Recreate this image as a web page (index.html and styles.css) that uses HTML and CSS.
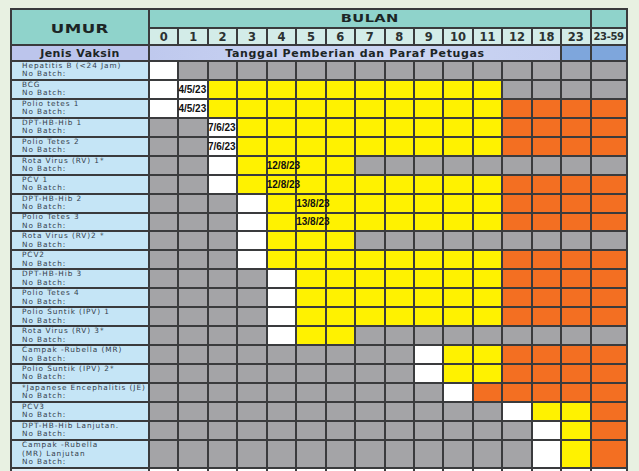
FILE: index.html
```html
<!DOCTYPE html>
<html lang="id">
<head>
<meta charset="utf-8">
<title>Jadwal Imunisasi</title>
<link rel="stylesheet" href="styles.css">
</head>
<body>
<main class="page">
<div class="sched">
  <div class="hd umur"><span class="wide">UMUR</span></div>
  <div class="hd bulan"><span class="wide">BULAN</span></div>
  <div class="teal"></div>

  <div class="hd num">0</div><div class="hd num">1</div><div class="hd num">2</div><div class="hd num">3</div><div class="hd num">4</div><div class="hd num">5</div><div class="hd num">6</div><div class="hd num">7</div><div class="hd num">8</div><div class="hd num">9</div><div class="hd num">10</div><div class="hd num">11</div><div class="hd num">12</div><div class="hd num">18</div><div class="hd num">23</div><div class="hd num small">23-59</div>

  <div class="hd jenis">Jenis Vaksin</div>
  <div class="hd tgl">Tanggal Pemberian dan Paraf Petugas</div>
  <div class="blue"></div><div class="blue"></div>

  <!-- Hepatitis B -->
  <div class="lbl"><span>Hepatitis B (&lt;24 Jam)</span><span>No Batch:</span></div>
  <div class="w"></div><div class="g"></div><div class="g"></div><div class="g"></div><div class="g"></div><div class="g"></div><div class="g"></div><div class="g"></div><div class="g"></div><div class="g"></div><div class="g"></div><div class="g"></div><div class="g"></div><div class="g"></div><div class="g"></div><div class="g"></div>

  <!-- BCG -->
  <div class="lbl"><span>BCG</span><span>No Batch:</span></div>
  <div class="w"></div><div class="w d"><span>4/5/23</span></div><div class="y"></div><div class="y"></div><div class="y"></div><div class="y"></div><div class="y"></div><div class="y"></div><div class="y"></div><div class="y"></div><div class="y"></div><div class="y"></div><div class="g"></div><div class="g"></div><div class="g"></div><div class="g"></div>

  <!-- Polio tetes 1 -->
  <div class="lbl"><span>Polio tetes 1</span><span>No Batch:</span></div>
  <div class="w"></div><div class="w d"><span>4/5/23</span></div><div class="y"></div><div class="y"></div><div class="y"></div><div class="y"></div><div class="y"></div><div class="y"></div><div class="y"></div><div class="y"></div><div class="y"></div><div class="y"></div><div class="o"></div><div class="o"></div><div class="o"></div><div class="o"></div>

  <!-- DPT-HB-Hib 1 -->
  <div class="lbl"><span>DPT-HB-Hib 1</span><span>No Batch:</span></div>
  <div class="g"></div><div class="g"></div><div class="w d"><span>7/6/23</span></div><div class="y"></div><div class="y"></div><div class="y"></div><div class="y"></div><div class="y"></div><div class="y"></div><div class="y"></div><div class="y"></div><div class="y"></div><div class="o"></div><div class="o"></div><div class="o"></div><div class="o"></div>

  <!-- Polio Tetes 2 -->
  <div class="lbl"><span>Polio Tetes 2</span><span>No Batch:</span></div>
  <div class="g"></div><div class="g"></div><div class="w d"><span>7/6/23</span></div><div class="y"></div><div class="y"></div><div class="y"></div><div class="y"></div><div class="y"></div><div class="y"></div><div class="y"></div><div class="y"></div><div class="y"></div><div class="o"></div><div class="o"></div><div class="o"></div><div class="o"></div>

  <!-- Rota Virus 1 -->
  <div class="lbl"><span>Rota Virus (RV) 1*</span><span>No Batch:</span></div>
  <div class="g"></div><div class="g"></div><div class="w"></div><div class="y"></div><div class="y d"><span>12/8/23</span></div><div class="y"></div><div class="y"></div><div class="g"></div><div class="g"></div><div class="g"></div><div class="g"></div><div class="g"></div><div class="g"></div><div class="g"></div><div class="g"></div><div class="g"></div>

  <!-- PCV 1 -->
  <div class="lbl"><span>PCV 1</span><span>No Batch:</span></div>
  <div class="g"></div><div class="g"></div><div class="w"></div><div class="y"></div><div class="y d"><span>12/8/23</span></div><div class="y"></div><div class="y"></div><div class="y"></div><div class="y"></div><div class="y"></div><div class="y"></div><div class="y"></div><div class="o"></div><div class="o"></div><div class="o"></div><div class="o"></div>

  <!-- DPT-HB-Hib 2 -->
  <div class="lbl"><span>DPT-HB-Hib 2</span><span>No Batch:</span></div>
  <div class="g"></div><div class="g"></div><div class="g"></div><div class="w"></div><div class="y"></div><div class="y d"><span>13/8/23</span></div><div class="y"></div><div class="y"></div><div class="y"></div><div class="y"></div><div class="y"></div><div class="y"></div><div class="o"></div><div class="o"></div><div class="o"></div><div class="o"></div>

  <!-- Polio Tetes 3 -->
  <div class="lbl"><span>Polio Tetes 3</span><span>No Batch:</span></div>
  <div class="g"></div><div class="g"></div><div class="g"></div><div class="w"></div><div class="y"></div><div class="y d"><span>13/8/23</span></div><div class="y"></div><div class="y"></div><div class="y"></div><div class="y"></div><div class="y"></div><div class="y"></div><div class="o"></div><div class="o"></div><div class="o"></div><div class="o"></div>

  <!-- Rota Virus 2 -->
  <div class="lbl"><span>Rota Virus (RV)2 *</span><span>No Batch:</span></div>
  <div class="g"></div><div class="g"></div><div class="g"></div><div class="w"></div><div class="y"></div><div class="y"></div><div class="y"></div><div class="g"></div><div class="g"></div><div class="g"></div><div class="g"></div><div class="g"></div><div class="g"></div><div class="g"></div><div class="g"></div><div class="g"></div>

  <!-- PCV2 -->
  <div class="lbl"><span>PCV2</span><span>No Batch:</span></div>
  <div class="g"></div><div class="g"></div><div class="g"></div><div class="w"></div><div class="y"></div><div class="y"></div><div class="y"></div><div class="y"></div><div class="y"></div><div class="y"></div><div class="y"></div><div class="y"></div><div class="o"></div><div class="o"></div><div class="o"></div><div class="o"></div>

  <!-- DPT-HB-Hib 3 -->
  <div class="lbl"><span>DPT-HB-Hib 3</span><span>No Batch:</span></div>
  <div class="g"></div><div class="g"></div><div class="g"></div><div class="g"></div><div class="w"></div><div class="y"></div><div class="y"></div><div class="y"></div><div class="y"></div><div class="y"></div><div class="y"></div><div class="y"></div><div class="o"></div><div class="o"></div><div class="o"></div><div class="o"></div>

  <!-- Polio Tetes 4 -->
  <div class="lbl"><span>Polio Tetes 4</span><span>No Batch:</span></div>
  <div class="g"></div><div class="g"></div><div class="g"></div><div class="g"></div><div class="w"></div><div class="y"></div><div class="y"></div><div class="y"></div><div class="y"></div><div class="y"></div><div class="y"></div><div class="y"></div><div class="o"></div><div class="o"></div><div class="o"></div><div class="o"></div>

  <!-- Polio Suntik (IPV) 1 -->
  <div class="lbl"><span>Polio Suntik (IPV) 1</span><span>No Batch:</span></div>
  <div class="g"></div><div class="g"></div><div class="g"></div><div class="g"></div><div class="w"></div><div class="y"></div><div class="y"></div><div class="y"></div><div class="y"></div><div class="y"></div><div class="y"></div><div class="y"></div><div class="o"></div><div class="o"></div><div class="o"></div><div class="o"></div>

  <!-- Rota Virus 3 -->
  <div class="lbl"><span>Rota Virus (RV) 3*</span><span>No Batch:</span></div>
  <div class="g"></div><div class="g"></div><div class="g"></div><div class="g"></div><div class="w"></div><div class="y"></div><div class="y"></div><div class="g"></div><div class="g"></div><div class="g"></div><div class="g"></div><div class="g"></div><div class="g"></div><div class="g"></div><div class="g"></div><div class="g"></div>

  <!-- Campak-Rubella (MR) -->
  <div class="lbl"><span>Campak -Rubella (MR)</span><span>No Batch:</span></div>
  <div class="g"></div><div class="g"></div><div class="g"></div><div class="g"></div><div class="g"></div><div class="g"></div><div class="g"></div><div class="g"></div><div class="g"></div><div class="w"></div><div class="y"></div><div class="y"></div><div class="o"></div><div class="o"></div><div class="o"></div><div class="o"></div>

  <!-- Polio Suntik (IPV) 2 -->
  <div class="lbl"><span>Polio Suntik (IPV) 2*</span><span>No Batch:</span></div>
  <div class="g"></div><div class="g"></div><div class="g"></div><div class="g"></div><div class="g"></div><div class="g"></div><div class="g"></div><div class="g"></div><div class="g"></div><div class="w"></div><div class="y"></div><div class="y"></div><div class="o"></div><div class="o"></div><div class="o"></div><div class="o"></div>

  <!-- Japanese Encephalitis -->
  <div class="lbl"><span>*Japanese Encephalitis (JE)</span><span>No Batch:</span></div>
  <div class="g"></div><div class="g"></div><div class="g"></div><div class="g"></div><div class="g"></div><div class="g"></div><div class="g"></div><div class="g"></div><div class="g"></div><div class="g"></div><div class="w"></div><div class="o"></div><div class="o"></div><div class="o"></div><div class="o"></div><div class="o"></div>

  <!-- PCV3 -->
  <div class="lbl"><span>PCV3</span><span>No Batch:</span></div>
  <div class="g"></div><div class="g"></div><div class="g"></div><div class="g"></div><div class="g"></div><div class="g"></div><div class="g"></div><div class="g"></div><div class="g"></div><div class="g"></div><div class="g"></div><div class="g"></div><div class="w"></div><div class="y"></div><div class="y"></div><div class="o"></div>

  <!-- DPT-HB-Hib Lanjutan -->
  <div class="lbl"><span>DPT-HB-Hib Lanjutan.</span><span>No Batch:</span></div>
  <div class="g"></div><div class="g"></div><div class="g"></div><div class="g"></div><div class="g"></div><div class="g"></div><div class="g"></div><div class="g"></div><div class="g"></div><div class="g"></div><div class="g"></div><div class="g"></div><div class="g"></div><div class="w"></div><div class="y"></div><div class="o"></div>

  <!-- Campak-Rubella Lanjutan -->
  <div class="lbl"><span>Campak -Rubella</span><span>(MR) Lanjutan</span><span>No Batch:</span></div>
  <div class="g"></div><div class="g"></div><div class="g"></div><div class="g"></div><div class="g"></div><div class="g"></div><div class="g"></div><div class="g"></div><div class="g"></div><div class="g"></div><div class="g"></div><div class="g"></div><div class="g"></div><div class="w"></div><div class="y"></div><div class="o"></div>

  <!-- next row (cut off) -->
  <div class="lbl blank"></div>
  <div class="w"></div><div class="w"></div><div class="w"></div><div class="w"></div><div class="w"></div><div class="w"></div><div class="w"></div><div class="w"></div><div class="w"></div><div class="w"></div><div class="w"></div><div class="w"></div><div class="w"></div><div class="w"></div><div class="w"></div><div class="w"></div>
</div>
</main>
</body>
</html>
```

FILE: styles.css
```css
* { box-sizing: border-box; }

html, body {
  margin: 0;
  height: 471px;
  overflow: hidden;
}

body {
  background: #e8f1e2;
  font-family: "DejaVu Sans", "Noto Sans", sans-serif;
}

.page {
  padding: 8px 0 0 10px;
}

.sched {
  display: grid;
  width: max-content;
  grid-template-columns: 136px repeat(15, 27.45px) 34px;
  grid-template-rows: 17px 15px 14px repeat(20, 16.95px) 26px 20px;
  gap: 2px;
  padding: 2px;
  background: #3a3b3d;
}

.sched > div { min-width: 0; }

.hd {
  display: flex;
  align-items: center;
  justify-content: center;
  font-weight: bold;
  color: #1c2525;
  white-space: nowrap;
}

.umur {
  grid-row: span 2;
  background: #8fd3cb;
  font-size: 12.5px;
  padding-top: 2px;
}

.bulan {
  grid-column: span 15;
  background: #8fd3cb;
  font-size: 11px;
}

.wide {
  display: inline-block;
  letter-spacing: 0.3px;
  transform: scaleX(1.33);
}

.teal { background: #8fd3cb; }

.num {
  background: #d3ece8;
  font-size: 11.5px;
  color: #2b3232;
}

.num.small {
  font-size: 10px;
  letter-spacing: -0.4px;
}

.jenis {
  background: #bcc5ec;
  font-size: 11px;
  letter-spacing: 0.45px;
}

.tgl {
  grid-column: span 14;
  background: linear-gradient(90deg, #bfc9ee 0%, #ccd6f3 55%, #c4cef0 100%);
  font-size: 11px;
  letter-spacing: 0.65px;
}

.blue { background: #7ea6dc; }

.lbl {
  display: flex;
  flex-direction: column;
  justify-content: center;
  background: #c5e5f6;
  padding-left: 10px;
  font-size: 7.3px;
  line-height: 8.5px;
  letter-spacing: 0.95px;
  color: #343d4c;
  white-space: nowrap;
}

.lbl.blank { background: #e6f2f8; }

.w { background: #ffffff; }
.g { background: #a4a4a7; }
.y { background: #fff200; }
.o { background: #f36f22; }

.d {
  position: relative;
  z-index: 1;
  display: flex;
  align-items: center;
  font-family: "Liberation Sans", Arial, sans-serif;
  font-weight: bold;
  font-size: 10px;
  color: #111111;
  white-space: nowrap;
}

.d span { margin-left: -1px; }
```
